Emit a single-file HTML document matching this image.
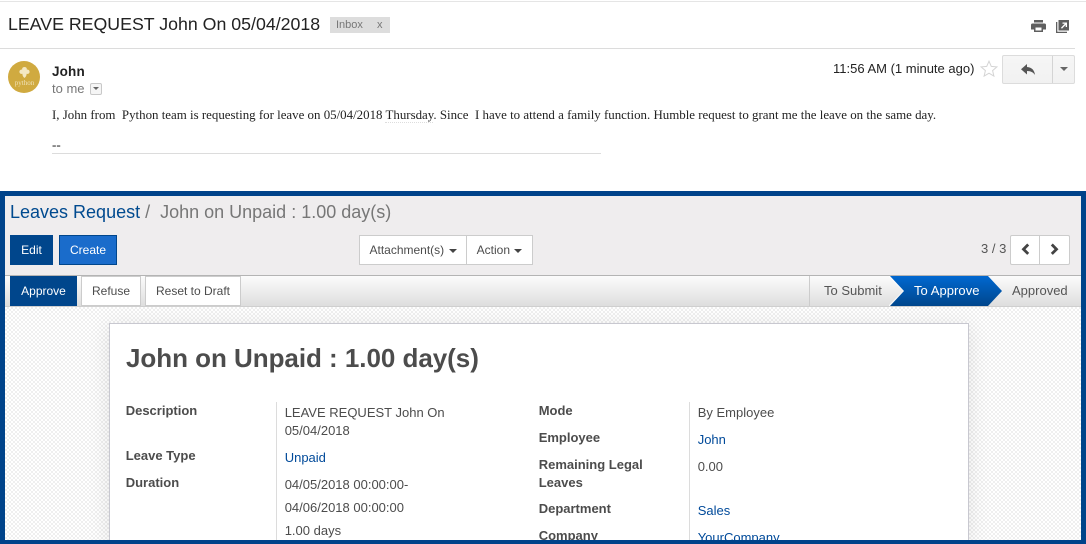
<!DOCTYPE html>
<html><head><meta charset="utf-8">
<style>
html,body{margin:0;padding:0;width:1086px;height:544px;overflow:hidden;background:#fff}
body{position:relative;font-family:"Liberation Sans",sans-serif;color:#4c4c4c}
.a{position:absolute;white-space:nowrap}
.b{box-sizing:border-box;text-align:center;font-size:12px}
.lab{font-size:13px;font-weight:bold;color:#4c4c4c;line-height:18px;margin-left:-.3px}
.val{font-size:13px;color:#4c4c4c;line-height:18px;margin-left:-.3px}
.lnk{color:#004a9a}
.caret{display:inline-block;width:0;height:0;border-left:4px solid transparent;border-right:4px solid transparent;border-top:4px solid #444;vertical-align:middle;margin-left:1px}
</style></head><body>
<div class="a" style="left:0;top:1px;width:1086px;height:1px;background:#e5e5e5"></div>
<div class="a" style="left:8px;top:12px;font-size:17.75px;line-height:24px;color:#222">LEAVE REQUEST John On 05/04/2018</div>
<div class="a" style="left:330px;top:17px;width:60px;height:16px;background:#ddd;font-size:11px;line-height:17px;color:#777"><span style="position:absolute;left:6px">Inbox</span><span style="position:absolute;left:47px">x</span></div>
<svg class="a" style="left:1031px;top:20px" width="15" height="12" viewBox="0 0 15 12"><path fill="#5f5f5f" fill-rule="evenodd" d="M3 0h9v2.500H3zM1.500 3.500h12A1.500 1.500 0 0 1 15 5v4.500h-3V12H3V9.500H0V5a1.500 1.500 0 0 1 1.500-1.500zM4.500 7.500v3h6v-3z"/></svg>
<svg class="a" style="left:1056px;top:20px" width="13" height="13" viewBox="0 0 13 13"><path fill="#5f5f5f" d="M0 2h1.300v9.700H11V13H0z"/><path fill="#5f5f5f" fill-rule="evenodd" d="M2.500 0H13v10.500H2.500zM5 7.800l.9.900L9.700 4.900V7H11V2.500H6.500v1.300h2.300z"/></svg>
<div class="a" style="left:0;top:48px;width:1075px;height:1px;background:#dcdcdc"></div>
<div class="a" style="left:8px;top:61px;width:32px;height:32px;border-radius:50%;background:#d0aa40"></div>
<svg class="a" style="left:18px;top:67px" width="13" height="12" viewBox="0 0 13 12"><path fill="#f4e8c4" d="M6.500 0C8.500 0 9 1.500 8.800 2.500 10.500 2.500 12 3.500 11.500 5.500 11 7 9.500 7 8.500 6.800 8.800 8 8 10 6.500 11 5 10 4.200 8 4.500 6.800 3.500 7 2 7 1.500 5.500 1 3.500 2.500 2.500 4.200 2.500 4 1.500 4.500 0 6.500 0z"/></svg>
<div class="a" style="left:8px;top:79px;width:33px;text-align:center;font-family:'Liberation Serif',serif;font-size:7px;line-height:8px;color:#f0e2b8">python</div>
<div class="a" style="left:52px;top:64px;font-size:13.5px;line-height:16px;font-weight:bold;letter-spacing:.15px;color:#222">John</div>
<div class="a" style="left:52px;top:81px;font-size:13px;line-height:16px;color:#777">to me</div>
<div class="a" style="left:90px;top:83px;width:12px;height:12px;box-sizing:border-box;border:1px solid #c8c8c8;border-radius:2px;background:#f5f5f5"><div style="position:absolute;left:2px;top:3px;width:0;height:0;border-left:3px solid transparent;border-right:3px solid transparent;border-top:3px solid #666"></div></div>
<div class="a" style="left:833px;top:61px;font-size:13px;line-height:16px;color:#222">11:56 AM (1 minute ago)</div>
<svg class="a" style="left:980px;top:60px" width="18" height="17" viewBox="0 0 18 17"><path fill="none" stroke="#d4d4d4" stroke-width="1" d="M9 1.200l2.300 5.200 5.600.5-4.300 3.700 1.300 5.500L9 13.200l-4.900 2.900 1.300-5.500L1.100 6.900l5.600-.5z"/></svg>
<div class="a" style="left:1002px;top:55px;width:73px;height:29px;box-sizing:border-box;border:1px solid #dcdcdc;border-radius:2px;background:linear-gradient(#f6f6f6,#f1f1f1)"><div style="position:absolute;left:49px;top:0;width:1px;height:27px;background:#d4d4d4"></div></div>
<svg class="a" style="left:1021px;top:64px" width="14" height="11" viewBox="0 0 14 11"><path fill="#555" d="M6 0v3C11 3.300 13.500 6.500 14 11 12.500 8.500 10 7 6 7v3.500L0 5.200z"/></svg>
<div class="a" style="left:1060px;top:67px;width:0;height:0;border-left:4px solid transparent;border-right:4px solid transparent;border-top:4px solid #666"></div>
<div class="a" style="left:52px;top:106px;font-family:'Liberation Serif',serif;font-size:12.92px;line-height:18px;color:#222;white-space:pre">I, John from  Python team is requesting for leave on 05/04/2018 <span style="border-bottom:1px dotted #ddd">Thursday</span>. Since  I have to attend a family function. Humble request to grant me the leave on the same day.</div>
<div class="a" style="left:52px;top:137px;font-family:'Liberation Serif',serif;font-size:13px;line-height:16px;color:#111">--</div>
<div class="a" style="left:52px;top:153px;width:549px;height:1px;background:#dcdcdc"></div>

<div class="a" style="left:0;top:191px;width:1086px;height:353px;background:#00438a"></div>
<div class="a" style="left:5px;top:196px;width:1076px;height:344px;overflow:hidden;background:#efedee">
  <div class="a" style="left:0;top:111px;width:1076px;height:233px;background-color:#f7f7f7;background-image:conic-gradient(#efefef 25%,#fff 0 50%,#efefef 0 75%,#fff 0);background-size:4px 4px"></div>
</div>
<div class="a" style="left:10px;top:201px;font-size:18px;line-height:22px;color:#004a8f">Leaves Request<span style="color:#777"> /&nbsp; John on Unpaid : 1.00 day(s)</span></div>
<div class="a b" style="left:10px;top:235px;width:43px;height:30px;background:#00468c;color:#fff;line-height:30px">Edit</div>
<div class="a b" style="left:59px;top:235px;width:58px;height:30px;background:#1a6ccb;border:1px solid #00468c;color:#fff;line-height:28px">Create</div>
<div class="a b" style="left:359px;top:235px;width:108px;height:30px;background:#fff;border:1px solid #ccc;line-height:28px">Attachment(s) <span class="caret"></span></div>
<div class="a b" style="left:466px;top:235px;width:67px;height:30px;background:#fff;border:1px solid #ccc;line-height:28px">Action <span class="caret"></span></div>
<div class="a" style="left:981px;top:241px;font-size:13px;line-height:16px;color:#555">3 / 3</div>
<div class="a" style="left:1010px;top:235px;width:60px;height:30px;box-sizing:border-box;background:#fff;border:1px solid #ccc;border-radius:2px"><div style="position:absolute;left:28px;top:0;width:1px;height:28px;background:#ccc"></div></div>
<svg class="a" style="left:1021px;top:243px" width="10" height="13" viewBox="0 0 10 13"><path fill="none" stroke="#444" stroke-width="2.800" d="M7.200 1.500L2.500 6.200l4.700 4.700"/></svg>
<svg class="a" style="left:1049px;top:243px" width="10" height="13" viewBox="0 0 10 13"><path fill="none" stroke="#444" stroke-width="2.800" d="M2.800 1.500l4.700 4.700-4.700 4.700"/></svg>

<div class="a" style="left:5px;top:275px;width:1076px;height:32px;box-sizing:border-box;border-top:1px solid #b4b4b4;border-bottom:1px solid #cfcfcf;background:linear-gradient(#fcfcfc,#dedede)"></div>
<div class="a b" style="left:10px;top:276px;width:67px;height:30px;background:#00468c;color:#fff;line-height:30px">Approve</div>
<div class="a b" style="left:81px;top:276px;width:60px;height:30px;background:#fff;border:1px solid #ccc;line-height:28px">Refuse</div>
<div class="a b" style="left:145px;top:276px;width:96px;height:30px;background:#fff;border:1px solid #ccc;line-height:28px">Reset to Draft</div>
<div class="a" style="left:809px;top:276px;width:1px;height:30px;background:#ccc"></div>
<div class="a" style="left:824px;top:283px;font-size:13px;line-height:16px;color:#555">To Submit</div>
<svg class="a" style="left:889px;top:276px" width="116" height="30" viewBox="0 0 116 30"><defs><linearGradient id="g" x1="0" y1="0" x2="0" y2="1"><stop offset="0" stop-color="#0068d0"/><stop offset="1" stop-color="#00468c"/></linearGradient></defs><path fill="none" stroke="#fff" stroke-width="1.500" opacity=".8" d="M0 0l15 15L0 30"/><path fill="url(#g)" d="M1 0h98l14 15-14 15H1l14-15z"/></svg>
<div class="a" style="left:914px;top:283px;font-size:13px;line-height:16px;color:#fff;letter-spacing:.05px">To Approve</div>
<div class="a" style="left:1012px;top:283px;font-size:13px;line-height:16px;color:#555">Approved</div>

<div class="a" style="left:109px;top:323px;width:860px;height:217px;box-sizing:border-box;background:#fff;border:1px solid #c8c8d0;border-bottom:0;box-shadow:0 4px 20px rgba(0,0,0,.1)"></div>
<div class="a" style="left:126px;top:343px;font-size:26px;line-height:30px;font-weight:bold;letter-spacing:-.04px;color:#4c4c4c">John on Unpaid : 1.00 day(s)</div>
<div class="a" style="left:276px;top:402px;width:1px;height:138px;background:#dcdcdc"></div>
<div class="a" style="left:689px;top:402px;width:1px;height:138px;background:#dcdcdc"></div>

<div class="a lab" style="left:126px;top:402px">Description</div>
<div class="a val" style="left:285px;top:404px">LEAVE REQUEST John On<br>05/04/2018</div>
<div class="a lab" style="left:126px;top:447px">Leave Type</div>
<div class="a val lnk" style="left:285px;top:449px">Unpaid</div>
<div class="a lab" style="left:126px;top:474px">Duration</div>
<div class="a val" style="left:285px;top:476px">04/05/2018 00:00:00-</div>
<div class="a val" style="left:285px;top:499px">04/06/2018 00:00:00</div>
<div class="a val" style="left:285px;top:522px">1.00 days</div>

<div class="a lab" style="left:539px;top:402px">Mode</div>
<div class="a val" style="left:698px;top:404px">By Employee</div>
<div class="a lab" style="left:539px;top:429px">Employee</div>
<div class="a val lnk" style="left:698px;top:431px">John</div>
<div class="a lab" style="left:539px;top:456px">Remaining Legal<br>Leaves</div>
<div class="a val" style="left:698px;top:458px">0.00</div>
<div class="a lab" style="left:539px;top:500px">Department</div>
<div class="a val lnk" style="left:698px;top:502px">Sales</div>
<div class="a lab" style="left:539px;top:527px">Company</div>
<div class="a val lnk" style="left:698px;top:529px">YourCompany</div>
<div class="a" style="left:0;top:540px;width:1086px;height:4px;background:#00438a"></div>
</body></html>
